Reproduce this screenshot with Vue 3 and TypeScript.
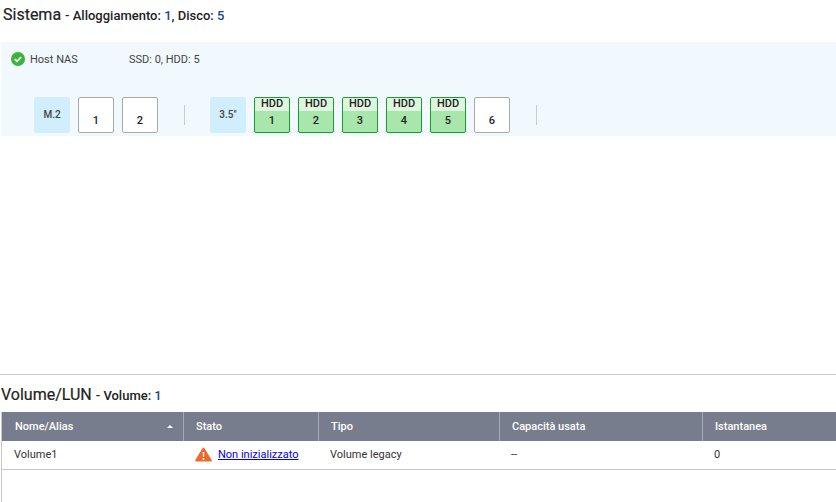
<script setup lang="ts">
const firstSlots = ['1', '2']
const bays = [
  { n: '1', used: true },
  { n: '2', used: true },
  { n: '3', used: true },
  { n: '4', used: true },
  { n: '5', used: true },
  { n: '6', used: false },
]
const columns = [
  { label: 'Nome/Alias', w: 182, sort: true },
  { label: 'Stato', w: 135 },
  { label: 'Tipo', w: 181 },
  { label: 'Capacità usata', w: 203 },
  { label: 'Istantanea', w: 133 },
]
</script>

<template>
  <div class="page">
    <h2 class="title sys-title">
      Sistema <small>- Alloggiamento: <b>1</b>, Disco: <b>5</b></small>
    </h2>

    <section class="panel">
      <div class="host">
        <svg class="ok" width="14" height="14" viewBox="0 0 14 14">
          <circle cx="7" cy="7" r="7" fill="#3cb43c" />
          <path d="M3.8 7.2 6 9.3 10.2 5.2" fill="none" stroke="#fff" stroke-width="1.8" />
        </svg>
        <span class="host-name">Host NAS</span>
        <span class="host-count">SSD: 0, HDD: 5</span>
      </div>
      <div class="slots">
        <div class="tag">M.2</div>
        <div class="group">
          <div v-for="s in firstSlots" :key="s" class="slot"><span>{{ s }}</span></div>
        </div>
        <i class="sep first"></i>
        <div class="tag">3.5"</div>
        <div class="group">
          <template v-for="b in bays" :key="b.n">
            <div v-if="b.used" class="slot used">
              <div class="kind">HDD</div>
              <div class="num">{{ b.n }}</div>
            </div>
            <div v-else class="slot"><span>{{ b.n }}</span></div>
          </template>
        </div>
        <i class="sep last"></i>
      </div>
    </section>

    <div class="spacer"></div>
    <hr class="rule" />

    <h2 class="title vol-title">
      Volume/LUN <small>- Volume: <b>1</b></small>
    </h2>

    <div class="table">
      <div class="thead">
        <div v-for="c in columns" :key="c.label" class="th" :style="{ width: c.w + 'px' }">
          {{ c.label }}
          <span v-if="c.sort" class="sort"></span>
        </div>
      </div>
      <div class="tr">
        <div class="td first-td" :style="{ width: columns[0].w + 'px' }">Volume1</div>
        <div class="td" :style="{ width: columns[1].w + 'px' }">
          <svg class="warn" width="17" height="15" viewBox="0 0 17 15">
            <path d="M8.5 1.6 15.8 13.6H1.2Z" fill="#ec6b2a" stroke="#ec6b2a" stroke-width="2" stroke-linejoin="round" />
            <path d="M7.7 5H9.3L9 10H8Z" fill="#fff" />
            <circle cx="8.5" cy="12" r="0.95" fill="#fff" />
          </svg>
          <a href="#" class="link">Non inizializzato</a>
        </div>
        <div class="td" :style="{ width: columns[2].w + 'px' }">Volume legacy</div>
        <div class="td" :style="{ width: columns[3].w + 'px' }">--</div>
        <div class="td" :style="{ width: columns[4].w + 'px' }">0</div>
      </div>
    </div>
  </div>
</template>

<style>
html, body { margin: 0; background: #fff; }
</style>

<style scoped>
.page {
  width: 836px;
  height: 502px;
  overflow: hidden;
  font-family: Roboto, "Liberation Sans", sans-serif;
  color: #333;
  display: flex;
  flex-direction: column;
}
.title {
  margin: 0;
  font-size: 16px;
  font-weight: 400;
  line-height: 20px;
  color: #222;
  -webkit-text-stroke: 0.2px #222;
}
.title small {
  font-size: 13px;
  font-weight: 500;
  -webkit-text-stroke: 0;
}
.title b { font-weight: 500; color: #1c4587; }
.sys-title { padding: 5px 0 0 3px; }
.panel {
  margin-top: 16px;
  margin-left: 1px;
  height: 94px;
  background: #f1f9fe;
  box-sizing: border-box;
  padding-top: 9px;
}
.host {
  display: flex;
  align-items: center;
  height: 16px;
  padding-left: 10px;
  font-size: 11px;
  color: #444;
}
.host-name { margin-left: 5px; width: 99px; }
.slots {
  display: flex;
  align-items: flex-start;
  margin-top: 30px;
  padding-left: 33px;
}
.tag {
  width: 36px;
  height: 36px;
  box-sizing: border-box;
  padding-bottom: 2px;
  background: #d0eefd;
  border-radius: 2px;
  font-size: 10px;
  font-weight: 500;
  color: #444;
  display: flex;
  align-items: center;
  justify-content: center;
}
.group { display: flex; gap: 8px; margin-left: 8px; }
.slot {
  width: 36px;
  height: 36px;
  box-sizing: border-box;
  border: 1px solid #aaa;
  border-radius: 2px;
  background: #fff;
  font-size: 11px;
  font-weight: 500;
  color: #222;
  text-align: center;
  overflow: hidden;
}
.slot span { display: block; margin-top: 15px; line-height: 16px; }
.slot.used { border-color: #12a12a; background: #a9e6ab; }
.kind { height: 13px; line-height: 12px; background: #e0f5e0; font-size: 11px; }
.num { line-height: 20px; }
.sep { width: 1px; height: 20px; background: #c8ccd0; margin-top: 8px; }
.sep.first { margin-left: 26px; margin-right: 25px; }
.sep.last { margin-left: 26px; }
.spacer { flex: 1; }
.rule { margin: 0; border: 0; height: 1px; background: #c8c8c8; }
.vol-title { padding: 10px 0 0 1px; }
.table { margin-top: 6px; height: 90px; margin-left: 1px; border-left: 1px solid #c8c8c8; }
.thead { display: flex; height: 29px; background: #777d8c; }
.th {
  flex: none;
  box-sizing: border-box;
  padding: 0 12px;
  line-height: 29px;
  font-size: 11px;
  font-weight: 500;
  color: #fff;
  position: relative;
  border-right: 1px solid #a5a9b3;
}
.th:first-child { padding-left: 13px; }
.th:last-child { border-right: 0; width: 134px; }
.sort {
  position: absolute;
  right: 10px;
  top: 13px;
  border: 3px solid transparent;
  border-top: 0;
  border-bottom: 3px solid #fff;
}
.tr { display: flex; height: 28px; border-bottom: 1px solid #c8c8c8; }
.td {
  flex: none;
  box-sizing: border-box;
  padding: 0 11px;
  line-height: 28px;
  font-size: 11px;
  color: #333;
  white-space: nowrap;
  display: flex;
  align-items: center;
}
.first-td { padding-left: 12px; }
.warn { margin: -2px 6px 0 0; }
.link { color: #0000ee; text-decoration: underline; }
</style>
